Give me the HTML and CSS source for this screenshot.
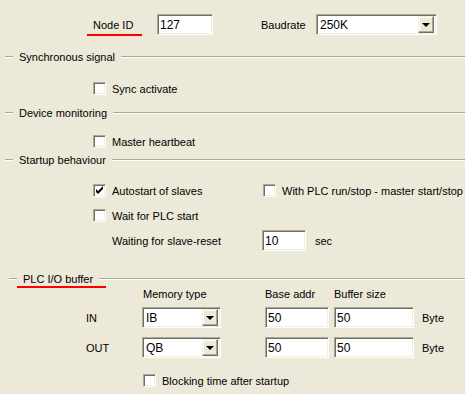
FILE: index.html
```html
<!DOCTYPE html>
<html lang="en">
<head>
    <meta charset="UTF-8">
    <title>CAN Master settings</title>
    <link rel="stylesheet" href="styles.css">
</head>
<body>
    <div class="dialog">
        <div class="top-row">
            <span class="node-label"><span class="marked">Node ID</span></span>
            <input class="field node-id" type="text" value="127">
            <span class="baud-label">Baudrate</span>
            <div class="combo baud">
                <span class="combo-text">250K</span>
                <span class="combo-btn"><span class="arrow"></span></span>
            </div>
        </div>

        <div class="group-head sync-head">
            <span class="dash"></span><span class="title">Synchronous signal</span><span class="rule"></span>
        </div>
        <div class="row sync-row">
            <label class="check"><span class="box"></span>Sync activate</label>
        </div>

        <div class="group-head device-head">
            <span class="dash"></span><span class="title">Device monitoring</span><span class="rule"></span>
        </div>
        <div class="row heart-row">
            <label class="check"><span class="box"></span>Master heartbeat</label>
        </div>

        <div class="group-head startup-head">
            <span class="dash"></span><span class="title">Startup behaviour</span><span class="rule"></span>
        </div>
        <div class="row auto-row">
            <label class="check auto"><span class="box checked">
                <svg width="9" height="9" viewBox="0 0 9 9"><path d="M1 3v3l2 2 5-5V0L3 5z" fill="#000"/></svg>
            </span>Autostart of slaves</label>
            <label class="check"><span class="box"></span>With PLC run/stop - master start/stop</label>
        </div>
        <div class="row wait-row">
            <label class="check"><span class="box"></span>Wait for PLC start</label>
        </div>
        <div class="row reset-row">
            <span class="reset-label">Waiting for slave-reset</span>
            <input class="field reset" type="text" value="10">
            <span class="unit">sec</span>
        </div>

        <div class="group-head plc-head">
            <span class="dash"></span><span class="title marked">PLC I/O buffer</span><span class="rule"></span>
        </div>
        <div class="io-head">
            <span class="col-mem">Memory type</span>
            <span class="col-base">Base addr</span>
            <span>Buffer size</span>
        </div>
        <div class="io-row in-row">
            <span class="io-label">IN</span>
            <div class="combo mem-combo">
                <span class="combo-text">IB</span>
                <span class="combo-btn"><span class="arrow"></span></span>
            </div>
            <input class="field base" type="text" value="50">
            <input class="field size" type="text" value="50">
            <span class="unit byte">Byte</span>
        </div>
        <div class="io-row out-row">
            <span class="io-label">OUT</span>
            <div class="combo mem-combo">
                <span class="combo-text">QB</span>
                <span class="combo-btn"><span class="arrow"></span></span>
            </div>
            <input class="field base" type="text" value="50">
            <input class="field size" type="text" value="50">
            <span class="unit byte">Byte</span>
        </div>
        <div class="row block-row">
            <label class="check"><span class="box"></span>Blocking time after startup</label>
        </div>
    </div>
</body>
</html>
```

FILE: styles.css
```css
body {
    margin: 0;
    background: #ece9d8;
    font-family: "Liberation Sans", Arial, sans-serif;
    font-size: 11px;
    color: #000;
}

.dialog {
    width: 465px;
    height: 394px;
    overflow: hidden;
    white-space: nowrap;
}

/* sunken edit box, XP classic look */
.field {
    box-sizing: border-box;
    height: 21px;
    margin: 0;
    padding: 1px 2px 0;
    border: 1px solid;
    border-color: #aca899 #fff #fff #aca899;
    box-shadow: inset 1px 1px #716f64, inset -1px -1px #f1efe2;
    background: #fff;
    font: inherit;
    font-size: 12px;
    outline: none;
}

.combo {
    box-sizing: border-box;
    height: 21px;
    display: flex;
    align-items: center;
    border: 1px solid;
    border-color: #aca899 #fff #fff #aca899;
    box-shadow: inset 1px 1px #716f64, inset -1px -1px #f1efe2;
    background: #fff;
    padding: 2px 2px 2px 3px;
    font-size: 12px;
}

.combo-text {
    flex: 1;
}

.combo-btn {
    box-sizing: border-box;
    width: 16px;
    height: 17px;
    background: #ece9d8;
    border: 1px solid;
    border-color: #f1efe2 #716f64 #716f64 #f1efe2;
    box-shadow: inset -1px -1px #aca899, inset 1px 1px #fff;
    display: flex;
    align-items: center;
    justify-content: center;
}

.arrow {
    width: 0;
    height: 0;
    border-left: 4px solid transparent;
    border-right: 4px solid transparent;
    border-top: 4px solid #000;
    margin-top: 1px;
}

/* red annotation underline */
.marked {
    position: relative;
}

.marked::after {
    content: "";
    position: absolute;
    left: -6px;
    right: -9px;
    bottom: -5px;
    height: 2px;
    background: #f00;
}

.plc-head .marked::after {
    right: -13px;
    bottom: -3px;
}

/* top row */
.top-row {
    display: flex;
    align-items: center;
    height: 21px;
    margin-top: 14px;
}

.node-label {
    margin-left: 93px;
    width: 64px;
}

.node-id {
    width: 56px;
}

.baud-label {
    margin-left: 48px;
    width: 55px;
}

.baud {
    width: 121px;
}

/* group headers */
.group-head {
    display: flex;
    align-items: center;
    height: 14px;
}

.dash,
.rule {
    height: 0;
    border-top: 1px solid #aca899;
    border-bottom: 1px solid #fff;
}

.dash {
    width: 8px;
    margin-left: 5px;
    margin-right: 6px;
}

.rule {
    flex: 1;
    margin-left: 6px;
}

.sync-head { margin-top: 15px; }
.device-head { margin-top: 11px; }
.startup-head { margin-top: 5px; }
.plc-head { margin-top: 21px; }

.plc-head .dash {
    margin-left: 9px;
}

/* checkbox rows */
.row {
    display: flex;
    align-items: center;
    height: 13px;
    padding-left: 93px;
}

.check {
    display: flex;
    align-items: center;
}

.box {
    box-sizing: border-box;
    width: 13px;
    height: 13px;
    margin-right: 6px;
    border: 1px solid;
    border-color: #aca899 #fff #fff #aca899;
    box-shadow: inset 1px 1px #716f64, inset -1px -1px #f1efe2;
    background: #fff;
    display: flex;
    align-items: center;
    justify-content: center;
}

.box svg {
    display: block;
}

.auto {
    width: 170px;
}

.sync-row { margin-top: 18px; }
.heart-row { margin-top: 15px; }
.auto-row { margin-top: 17px; }
.wait-row { margin-top: 12px; }

.reset-row {
    height: 21px;
    margin-top: 8px;
    padding-left: 112px;
}

.reset-label {
    width: 150px;
}

.reset {
    width: 44px;
}

.unit {
    margin-left: 9px;
}

/* PLC I/O table */
.io-head {
    display: flex;
    align-items: center;
    height: 13px;
    margin-top: 1px;
    padding-left: 143px;
}

.col-mem {
    width: 122px;
}

.col-base {
    width: 69px;
}

.io-row {
    display: flex;
    align-items: center;
    height: 21px;
    padding-left: 86px;
}

.in-row { margin-top: 7px; }
.out-row { margin-top: 9px; }

.io-label {
    width: 56px;
}

.mem-combo {
    width: 79px;
}

.base {
    width: 64px;
    margin-left: 44px;
}

.size {
    width: 80px;
    margin-left: 5px;
}

.byte {
    margin-left: 8px;
}

.block-row {
    padding-left: 143px;
    margin-top: 16px;
}
```
